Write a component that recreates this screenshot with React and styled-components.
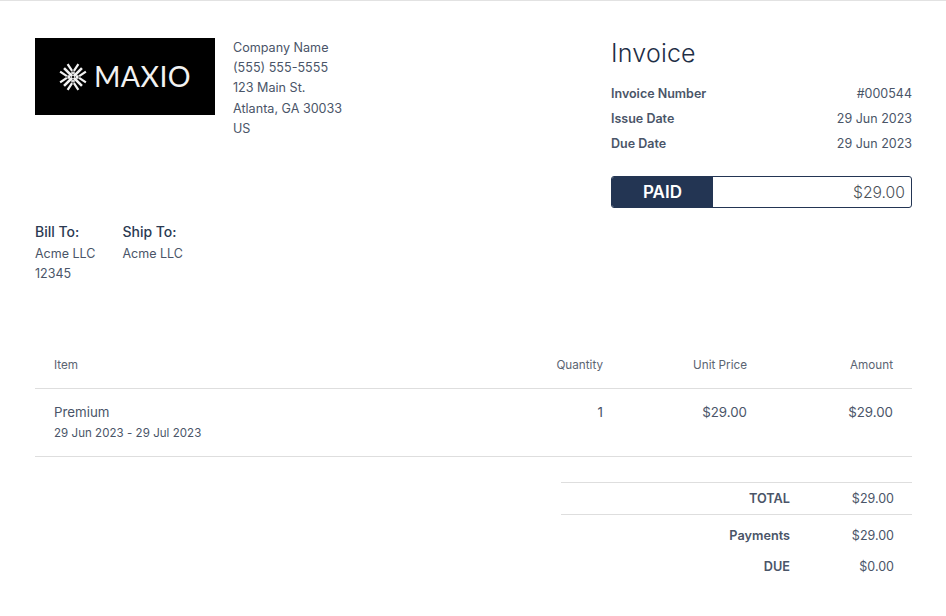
import React from "react";
import styled, { createGlobalStyle } from "styled-components";

const Global = createGlobalStyle`
  html, body { margin: 0; padding: 0; background: #fff; }
  body { font-family: Inter, "Liberation Sans", sans-serif; color: #4a5568; font-size: 12.5px; }
`;

const Page = styled.div`
  width: 946px;
  height: 616px;
  box-sizing: border-box;
  border-top: 1px solid #e2e2e2;
  padding: 37px 34px 0 35px;
  overflow: hidden;
`;
const Header = styled.div`
  display: flex;
  justify-content: space-between;
  height: 170px;
`;
const Brand = styled.div`
  display: flex;
  gap: 18px;
`;
const Logo = styled.div`
  width: 180px;
  height: 77px;
  background: #000;
  color: #f2f2f2;
  display: flex;
  align-items: center;
  gap: 7px;
  padding-left: 24px;
  box-sizing: border-box;
`;
const LogoText = styled.span`
  font-family: Lato, Inter, sans-serif;
  font-weight: 400;
  font-size: 28.5px;
  letter-spacing: 0.4px;
  line-height: 1;
  margin-top: -1px;
`;
const Address = styled.div`
  font-size: 12.6px;
  line-height: 20.2px;
`;
const Line = styled.div``;
const Summary = styled.div`
  width: 301px;
`;
const Title = styled.h1`
  margin: -1px 0 0;
  font-size: 25px;
  line-height: 32px;
  font-weight: 300;
  color: #1f2f46;
  letter-spacing: 0.2px;
`;
const Meta = styled.div`
  margin-top: 12px;
  display: grid;
  grid-auto-rows: 25px;
  align-items: center;
`;
const MetaRow = styled.div`
  display: flex;
  justify-content: space-between;
  line-height: 25px;
`;
const MetaLabel = styled.span`
  font-weight: 600;
  font-size: 12.5px;
`;
const MetaValue = styled.span`
  font-size: 12.5px;
`;
const PaidBar = styled.div`
  margin-top: 20px;
  display: flex;
  height: 32px;
  box-sizing: border-box;
  border: 1px solid #233553;
  border-radius: 3px;
  overflow: hidden;
`;
const PaidTag = styled.div`
  width: 101px;
  background: #233553;
  color: #fff;
  font-weight: 600;
  font-size: 17px;
  display: flex;
  align-items: center;
  justify-content: center;
`;
const PaidAmount = styled.div`
  flex: 1;
  font-size: 15.7px;
  font-weight: 300;
  color: #4b5058;
  display: flex;
  align-items: center;
  justify-content: flex-end;
  padding-right: 6px;
`;
const Parties = styled.div`
  display: flex;
  gap: 27px;
  margin-top: 14px;
  height: 126px;
`;
const Party = styled.div`
  line-height: 20px;
`;
const PartyTitle = styled.div`
  font-size: 14px;
  font-weight: 500;
  color: #2b3a52;
  line-height: 20px;
  margin-bottom: 2px;
`;
const Row = styled.div`
  display: grid;
  grid-template-columns: 1fr 120px 144px 146px;
  padding: 0 19px;
  border-bottom: 1px solid #dedede;
  box-sizing: border-box;
  height: ${(p) => p.$h}px;
  padding-top: ${(p) => p.$top}px;
`;
const HeadCell = styled.div`
  font-size: 11.7px;
  line-height: 20px;
  text-align: ${(p) => (p.$left ? "left" : "right")};
  color: #5b6472;
`;
const Cell = styled.div`
  font-size: 13.3px;
  line-height: 20px;
  text-align: ${(p) => (p.$left ? "left" : "right")};
`;
const SubText = styled.div`
  font-size: 11.5px;
  line-height: 20px;
  margin-top: 1px;
  letter-spacing: 0.05px;
`;
const Totals = styled.div`
  margin: 25px 0 0 auto;
  width: 351px;
`;
const TotalRow = styled.div`
  display: grid;
  grid-template-columns: 229px 104px;
  height: ${(p) => p.$h}px;
  align-items: center;
  border-top: ${(p) => (p.$rule ? "1px solid #dedede" : "none")};
`;
const TotalLabel = styled.div`
  font-weight: 600;
  font-size: 12.7px;
  text-align: right;
`;
const TotalValue = styled.div`
  font-size: 12.5px;
  text-align: right;
`;

const Snowflake = () => (
  <svg width="28" height="28" viewBox="1.500 1.500 25 25" fill="none" stroke="#f2f2f2" strokeWidth="2">
    <path d="M13.300 13.300L6 6M14.700 13.300L22 6M13.300 14.700L6 22M14.700 14.700L22 22" strokeWidth="2.300" />
    <path d="M13.200 8.500L9.200 2.500M14.800 8.500L18.800 2.500M13.200 19.500L9.200 25.500M14.800 19.500L18.800 25.500" />
    <path d="M8.500 13.200L2.500 9.200M8.500 14.800L2.500 18.800M19.500 13.200L25.500 9.200M19.500 14.800L25.500 18.800" />
    <path d="M13.200 11.500V9M14.800 11.500V9M13.200 16.500V19M14.800 16.500V19M11.500 13.200H9M11.500 14.800H9M16.500 13.200H19M16.500 14.800H19" strokeWidth="1.400" />
  </svg>
);

export default function App() {
  return (
    <Page>
      <Global />
      <Header>
        <Brand>
          <Logo>
            <Snowflake />
            <LogoText>MAXIO</LogoText>
          </Logo>
          <Address>
            <Line>Company Name</Line>
            <Line>(555) 555-5555</Line>
            <Line>123 Main St.</Line>
            <Line>Atlanta, GA 30033</Line>
            <Line>US</Line>
          </Address>
        </Brand>
        <Summary>
          <Title>Invoice</Title>
          <Meta>
            <MetaRow><MetaLabel>Invoice Number</MetaLabel><MetaValue>#000544</MetaValue></MetaRow>
            <MetaRow><MetaLabel>Issue Date</MetaLabel><MetaValue>29 Jun 2023</MetaValue></MetaRow>
            <MetaRow><MetaLabel>Due Date</MetaLabel><MetaValue>29 Jun 2023</MetaValue></MetaRow>
          </Meta>
          <PaidBar>
            <PaidTag>PAID</PaidTag>
            <PaidAmount>$29.00</PaidAmount>
          </PaidBar>
        </Summary>
      </Header>
      <Parties>
        <Party>
          <PartyTitle>Bill To:</PartyTitle>
          <Line>Acme LLC</Line>
          <Line>12345</Line>
        </Party>
        <Party>
          <PartyTitle>Ship To:</PartyTitle>
          <Line>Acme LLC</Line>
        </Party>
      </Parties>
      <Row $h={41} $top={7}>
        <HeadCell $left>Item</HeadCell>
        <HeadCell>Quantity</HeadCell>
        <HeadCell>Unit Price</HeadCell>
        <HeadCell>Amount</HeadCell>
      </Row>
      <Row $h={68} $top={13}>
        <Cell $left>
          Premium
          <SubText>29 Jun 2023 - 29 Jul 2023</SubText>
        </Cell>
        <Cell>1</Cell>
        <Cell>$29.00</Cell>
        <Cell>$29.00</Cell>
      </Row>
      <Totals>
        <TotalRow $rule $h={31}><TotalLabel>TOTAL</TotalLabel><TotalValue>$29.00</TotalValue></TotalRow>
        <TotalRow $rule $h={40}><TotalLabel>Payments</TotalLabel><TotalValue>$29.00</TotalValue></TotalRow>
        <TotalRow $h={22}><TotalLabel>DUE</TotalLabel><TotalValue>$0.00</TotalValue></TotalRow>
      </Totals>
    </Page>
  );
}
